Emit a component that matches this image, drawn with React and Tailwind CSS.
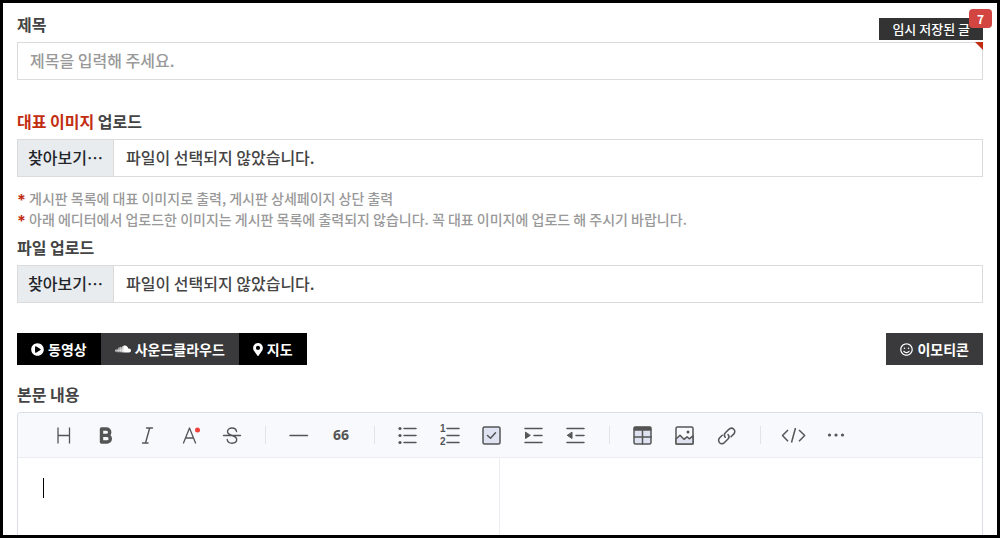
import { useState } from 'react';
import { FaPlayCircle, FaSoundcloud, FaMapMarkerAlt, FaRegSmile } from 'react-icons/fa';

function Icon({ children }) {
  return (
    <svg
      viewBox="0 -1 32 32"
      className="w-8 h-8"
      fill="none"
      stroke="#555"
      strokeWidth="1.5"
      strokeLinecap="round"
      strokeLinejoin="round"
      aria-hidden="true"
    >
      {children}
    </svg>
  );
}

const toolbarGroups = [
  [
    {
      name: '제목 크기',
      icon: <Icon><path strokeLinecap="butt" strokeWidth="1.3" d="M10 7.5v16M21.5 7.5v16M10 15.5h11.5" /></Icon>
    },
    {
      name: '굵게',
      icon: <Icon><path strokeWidth="3.4" d="M11.5 9v13h5.5a3.3 3.3 0 0 0 0-6.6h-5.5M11.5 9h5a3.2 3.2 0 0 1 0 6.4" /></Icon>
    },
    {
      name: '기울임꼴',
      icon: <Icon><path strokeWidth="1.4" d="M14.5 8h6M10.5 23h5.5M17.7 8l-4.2 15" /></Icon>
    },
    {
      name: '글자색',
      icon: (
        <Icon>
          <path strokeWidth="1.3" d="M9.5 23l6-15 6 15M11.5 18h8" />
          <circle cx="23.5" cy="10" r="2.5" fill="#f0413c" stroke="none" />
        </Icon>
      )
    },
    {
      name: '취소선',
      icon: <Icon><path strokeWidth="1.4" d="M7.5 15.5h17M20.5 11.5c-.3-2.2-2.1-3.5-4.5-3.5-2.6 0-4.5 1.4-4.5 3.6 0 2.3 2 3.1 4.5 3.9 2.8.9 4.7 1.7 4.7 4 0 2.2-2 3.7-4.7 3.7s-4.5-1.3-4.8-3.7" /></Icon>
    }
  ],
  [
    { name: '문단나눔', icon: <Icon><path d="M7 15.5h17.5" /></Icon> },
    { name: '인용구', icon: <span className="font-['Open_Sans',sans-serif] text-sm font-bold">66</span> }
  ],
  [
    {
      name: '글머리 기호',
      icon: (
        <Icon>
          <path d="M12 8.5h12M12 15.5h12M12 22.5h12" />
          <g fill="#555" stroke="none">
            <circle cx="8" cy="8.5" r="1.6" />
            <circle cx="8" cy="15.5" r="1.6" />
            <circle cx="8" cy="22.5" r="1.6" />
          </g>
        </Icon>
      )
    },
    {
      name: '번호 매기기',
      icon: (
        <Icon>
          <path d="M13 8.5h12M13 15.5h12M13 22.5h12" />
          <g fill="#555" stroke="none" fontFamily="Liberation Sans, sans-serif" fontSize="10" fontWeight="700">
            <text x="6" y="12">1</text>
            <text x="6" y="25">2</text>
          </g>
        </Icon>
      )
    },
    {
      name: '체크박스',
      icon: (
        <Icon>
          <rect x="7" y="7" width="17" height="17" rx="1.5" fill="#dfe2f0" />
          <path d="M11.5 15.5l3 2.8 5-5.5" />
        </Icon>
      )
    },
    {
      name: '들여쓰기',
      icon: (
        <Icon>
          <path d="M7 8.5h17M16 15.5h8M7 22.5h17" />
          <path fill="#555" strokeWidth="1" d="M7.5 12.5v6l4.5-3z" />
        </Icon>
      )
    },
    {
      name: '내어쓰기',
      icon: (
        <Icon>
          <path d="M7 8.5h17M16 15.5h8M7 22.5h17" />
          <path fill="#555" strokeWidth="1" d="M12 12.5v6l-4.5-3z" />
        </Icon>
      )
    }
  ],
  [
    {
      name: '표 삽입',
      icon: (
        <Icon>
          <rect x="7" y="7" width="17" height="17" rx="1.5" fill="#dfe2f0" />
          <path fill="#555" d="M7.5 7.5h16v2.5h-16zM15.5 10v14M7.5 17h16.5" />
        </Icon>
      )
    },
    {
      name: '이미지 삽입',
      icon: (
        <Icon>
          <rect x="7" y="7" width="17" height="17" rx="1.5" />
          <path fill="#dfe2f0" d="M7 19l4-3.7 4 4 3-2.5 2.3 2 3.7-3v8.2h-17z" />
          <circle cx="19" cy="12" r="1.5" fill="#555" stroke="none" />
        </Icon>
      )
    },
    {
      name: '링크 삽입',
      icon: (
        <Icon>
          <path d="M14.2 17.3c-1.3-1.6-1-3.3.2-4.5l3.4-3.4c1.5-1.5 3.6-1.5 5-.2s1.3 3.5-.1 4.9l-2.7 2.6" />
          <path d="M17 14.5c1.4 1.5 1.2 3.3 0 4.5l-3.5 3.5c-1.5 1.5-3.6 1.5-4.9.2-1.4-1.4-1.3-3.5.1-4.9l2.6-2.6" />
        </Icon>
      )
    }
  ],
  [
    { name: '코드', icon: <Icon><path strokeLinecap="butt" d="M10 10l-5.5 5.5 5.5 5.7M21 10l5.7 5.5-5.7 5.7M17.5 8l-4 14.5" /></Icon> },
    {
      name: '더보기',
      icon: (
        <Icon>
          <g fill="#555" stroke="none">
            <circle cx="9.5" cy="15" r="1.6" />
            <circle cx="16" cy="15" r="1.6" />
            <circle cx="22.5" cy="15" r="1.6" />
          </g>
        </Icon>
      )
    }
  ]
];

const imageNotes = [
  '게시판 목록에 대표 이미지로 출력, 게시판 상세페이지 상단 출력',
  '아래 에디터에서 업로드한 이미지는 게시판 목록에 출력되지 않습니다. 꼭 대표 이미지에 업로드 해 주시기 바랍니다.'
];

function FileField({ id, label, onSelect, fileName }) {
  return (
    <>
      <label htmlFor={id} className="font-bold">{label}</label>
      <label htmlFor={id} className="mt-1.5 flex h-[38px] cursor-pointer items-stretch border border-[#dbdbdb] bg-white">
        <input id={id} type="file" className="sr-only" onChange={(e) => onSelect(e.target.files[0]?.name)} />
        <span className="flex w-24 shrink-0 items-center justify-center border-r border-[#dbdbdb] bg-[#e9ecef] pb-0.5 font-medium text-[#212529]">
          찾아보기…
        </span>
        <span className="flex items-center px-3 pb-0.5 font-medium">{fileName || '파일이 선택되지 않았습니다.'}</span>
      </label>
    </>
  );
}

function App() {
  const [title, setTitle] = useState('');
  const [content, setContent] = useState('');
  const [mainImage, setMainImage] = useState('');
  const [attachment, setAttachment] = useState('');

  return (
    <form className="flex min-h-screen flex-col border-3 border-black bg-white px-3.5 pt-[9px] text-base leading-6 text-[#444] font-['Noto_Sans_CJK_KR',sans-serif]">
      {/* 제목 */}
      <div className="flex items-end justify-between">
        <label htmlFor="title" className="mb-1.5 font-bold">제목</label>
        <button type="button" className="relative mb-0.5 flex h-[22px] items-center bg-[#333] px-[13px] text-[13px] font-medium text-white">
          임시 저장된 글
          <span className="absolute -right-[9px] -top-[9px] flex h-[19px] w-[23px] items-center justify-center rounded bg-[#d24540] text-xs font-bold">
            7
          </span>
        </button>
      </div>
      <div className="relative">
        <input
          id="title"
          type="text"
          required
          value={title}
          onChange={(e) => setTitle(e.target.value)}
          placeholder="제목을 입력해 주세요."
          className="block h-[38px] w-full border border-[#dbdbdb] px-3 pb-0.5 font-medium outline-none placeholder:text-[#999]"
        />
        <span className="absolute right-0 top-0 h-2 w-2 bg-[#c22d12] [clip-path:polygon(0_0,100%_0,100%_100%)]" />
      </div>

      {/* 파일 */}
      <div className="mt-[29px] flex flex-col">
        <FileField
          id="main-image"
          label={<><span className="text-[#c22d12]">대표 이미지</span> 업로드</>}
          fileName={mainImage}
          onSelect={setMainImage}
        />
      </div>
      <ul className="mt-[11px] text-sm leading-[21px] font-medium text-[#999]">
        {imageNotes.map((note) => (
          <li key={note} className="flex">
            <span className="w-3 shrink-0 font-['Inter',sans-serif] text-base leading-6 h-[21px] font-bold text-[#c22d12]">*</span>
            {note}
          </li>
        ))}
      </ul>
      <div className="mt-[5px] flex flex-col">
        <FileField id="attachment" label="파일 업로드" fileName={attachment} onSelect={setAttachment} />
      </div>

      {/* 첨부 버튼 */}
      <div className="mt-[30px] flex justify-between text-sm font-bold text-white">
        <div className="flex">
          <button type="button" className="flex h-8 items-center gap-1 bg-black px-3.5">
            <FaPlayCircle className="h-[13px] w-[13px]" />
            동영상
          </button>
          <button type="button" className="flex h-8 items-center gap-1 bg-[#3a3a3c] px-3.5">
            <FaSoundcloud className="h-4 w-4" />
            사운드클라우드
          </button>
          <button type="button" className="flex h-8 items-center gap-1 bg-black px-3.5">
            <FaMapMarkerAlt className="h-[13px] w-[10px]" />
            지도
          </button>
        </div>
        <button type="button" className="flex h-8 items-center gap-1 bg-[#3a3a3c] px-3.5">
          <FaRegSmile className="h-[13px] w-[13px]" />
          이모티콘
        </button>
      </div>

      {/* 에디터 */}
      <label htmlFor="content" className="mt-[17px] font-bold">본문 내용</label>
      <div className="mt-1.5 flex flex-1 flex-col rounded-t border border-b-0 border-[#dadde6]">
        <div className="flex flex-wrap items-center rounded-t border-b border-[#ebedf2] bg-[#f7f9fc] px-[25px]">
          {toolbarGroups.map((group, index) => (
            <div key={index} className="flex items-center">
              {index > 0 && <span className="mx-3 h-[18px] w-px bg-[#e1e3e9]" />}
              {group.map(({ name, icon }) => (
                <button
                  key={name}
                  type="button"
                  aria-label={name}
                  className="mx-[5px] my-1.5 flex h-8 w-8 items-center justify-center text-[#555]"
                >
                  {icon}
                </button>
              ))}
            </div>
          ))}
        </div>
        <div className="flex flex-1">
          <div className="relative flex w-1/2 border-r border-[#ebedf2]">
            <textarea
              id="content"
              value={content}
              onChange={(e) => setContent(e.target.value)}
              className="w-full resize-none px-[25px] pt-[18px] outline-none"
            />
            {!content && <span className="absolute left-[25px] top-5 h-5 w-px bg-black" />}
          </div>
          <div className="w-1/2 px-[25px] pt-[18px]">{content}</div>
        </div>
      </div>
    </form>
  );
}

export default App;
